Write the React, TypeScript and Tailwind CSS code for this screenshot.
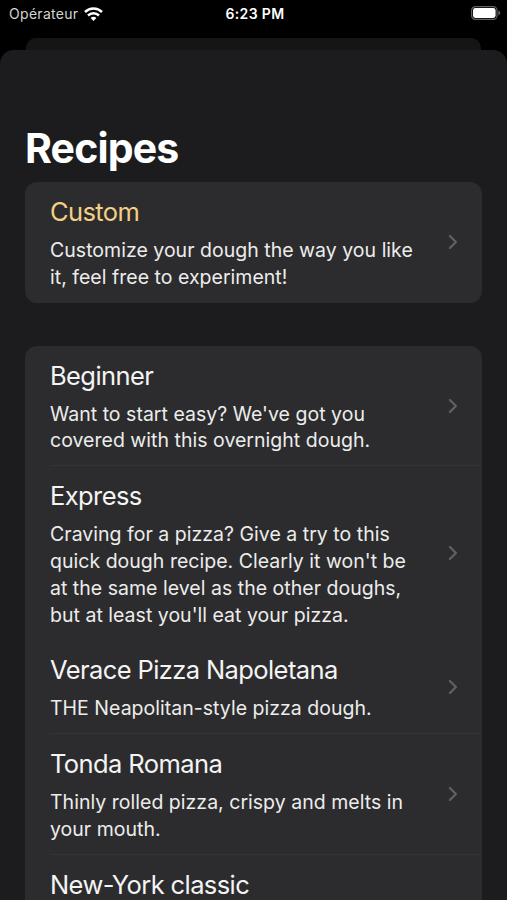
import React from 'react';

interface Recipe {
  title: string;
  lines: string[];
  accent?: boolean;
  divider?: boolean;
}

const custom: Recipe = {
  title: 'Custom',
  lines: ['Customize your dough the way you like', 'it, feel free to experiment!'],
  accent: true,
};

const recipes: Recipe[] = [
  {
    title: 'Beginner',
    lines: ["Want to start easy? We've got you", 'covered with this overnight dough.'],
    divider: true,
  },
  {
    title: 'Express',
    lines: [
      'Craving for a pizza? Give a try to this',
      "quick dough recipe. Clearly it won't be",
      'at the same level as the other doughs,',
      "but at least you'll eat your pizza.",
    ],
  },
  { title: 'Verace Pizza Napoletana', lines: ['THE Neapolitan-style pizza dough.'], divider: true },
  {
    title: 'Tonda Romana',
    lines: ['Thinly rolled pizza, crispy and melts in', 'your mouth.'],
    divider: true,
  },
  { title: 'New-York classic', lines: [] },
];

const StatusBar: React.FC = () => (
  <div className="grid h-[38px] shrink-0 grid-cols-3 items-start pt-[5px] pr-[6px] pl-[9px] text-[14px] leading-[18px] text-white">
    <div className="flex items-center gap-1.5">
      <span className="tracking-[0.3px] text-[#d4d4d4]">Opérateur</span>
      <svg width="19" height="14" viewBox="0 0 19 14" fill="none" stroke="currentColor" strokeWidth="2.5">
        <path d="M1 5C5.8.4 13.2.4 18 5" />
        <path d="M4 8.5c3.1-2.9 7.9-2.9 11 0" />
        <path d="M6.6 10.9c1.6-1.5 4.2-1.5 5.8 0L9.5 14z" fill="currentColor" stroke="none" />
      </svg>
    </div>
    <span className="text-center font-semibold tracking-[0.35px]">6:23 PM</span>
    <svg className="mt-px justify-self-end" width="30" height="14" viewBox="0 0 30 14" fill="none">
      <rect x=".6" y=".6" width="25.4" height="12.8" rx="3.8" stroke="#626262" strokeWidth="1.2" />
      <rect x="2" y="2" width="22.6" height="10" rx="2.4" fill="white" />
      <path d="M27.4 4.6c2.6.9 2.6 3.9 0 4.8z" fill="#626262" />
    </svg>
  </div>
);

const RecipeRow: React.FC<{ recipe: Recipe }> = ({ recipe }) => (
  <div className="pr-[2px] pl-[25px]">
    <div className={`flex items-center pt-[13px] pr-[22px] ${recipe.divider ? 'border-b border-[#343436] pb-[11px]' : 'pb-3'}`}>
      <div className="min-w-0 flex-1">
        <h2 className={`mb-[8px] text-[25.5px] leading-[34px] tracking-[-0.6px] whitespace-nowrap ${recipe.accent ? 'text-[#f3d083]' : 'text-[#f4f4f4]'}`}>
          {recipe.title}
        </h2>
        {recipe.lines.map((line) => (
          <p key={line} className="text-[19.5px] leading-[26.8px] tracking-[0.02px] whitespace-nowrap text-[#ececec]">{line}</p>
        ))}
      </div>
      {recipe.lines.length > 0 && (
        <svg className="-mt-px" width="11" height="16" viewBox="0 0 11 16" fill="none" stroke="#606063" strokeWidth="2.3" strokeLinecap="round" strokeLinejoin="round">
          <path d="M2.9 2l6 6-6 6" />
        </svg>
      )}
    </div>
  </div>
);

const App: React.FC = () => (
  <div className="flex h-[900px] w-[507px] flex-col overflow-hidden bg-black font-['Inter',sans-serif] text-white">
    <StatusBar />
    <div className="mx-[26px] h-3 shrink-0 rounded-t-[10px] bg-[#151515]" />
    <main className="flex-1 rounded-t-[14px] bg-[#1c1c1e] px-[25px] pt-[72px]">
      <h1 className="mb-[8px] text-[41px] leading-[52px] font-bold tracking-[-0.85px]">Recipes</h1>
      <section className="mb-[43px] rounded-[12px] bg-[#2c2c2e]">
        <RecipeRow recipe={custom} />
      </section>
      <section className="rounded-t-[12px] bg-[#2c2c2e]">
        {recipes.map((recipe) => (
          <RecipeRow key={recipe.title} recipe={recipe} />
        ))}
        <div className="h-10" />
      </section>
    </main>
  </div>
);

export default App;
